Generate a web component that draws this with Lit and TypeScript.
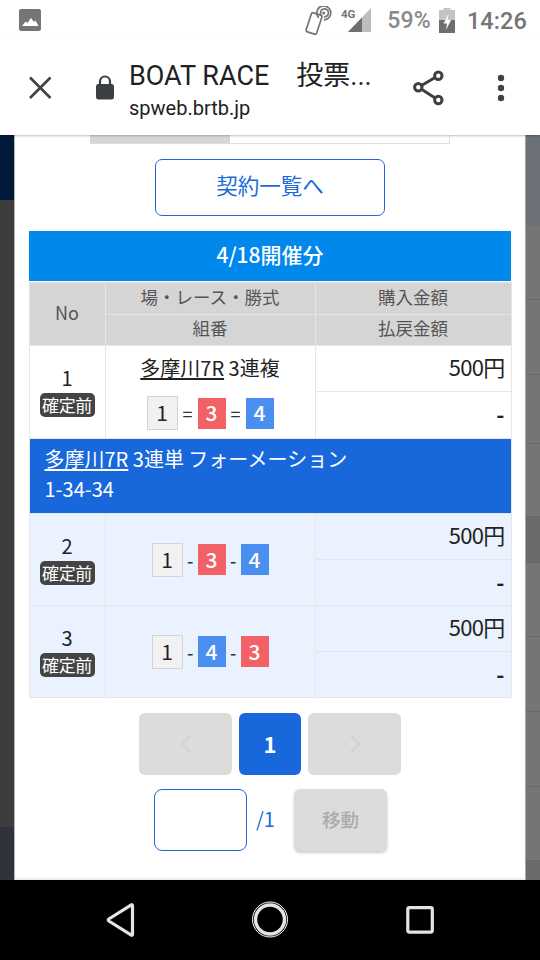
import { LitElement, html, css } from "lit";
import { customElement } from "lit/decorators.js";

const B: Record<number, string> = { 1: "w", 3: "r", 4: "b" };
const RIGHT_SEGS: [number, string][] = [
  [91, "#6c7078"], [74, "#757575"], [75, "#757575"], [69, "#757575"], [73, "#757575"],
  [46, "#6b6b6b"], [74, "#757575"], [75, "#757575"], [75, "#757575"], [74, "#757575"],
];

@customElement("app-root")
export class AppRoot extends LitElement {
  static styles = css`
    :host { display: flex; flex-direction: column; width: 540px; height: 960px; overflow: hidden; font-family: "Noto Sans CJK JP", "Noto Sans", sans-serif; color: #222; background: #fff; }
    .status { height: 40px; flex: none; display: flex; align-items: center; padding: 0 13px 0 19px; position: relative; z-index: 3; background: #fff; }
    .status .sp { flex: 1; }
    .pct { font: 500 23px Roboto, sans-serif; margin-left: 16px; letter-spacing: .2px; color: #8a8a8a; }
    .time { font: 500 23.5px/24px Roboto, sans-serif; margin-left: 12px; letter-spacing: .1px; color: #757575; padding-top: 2px; }
    .toolbar { height: 95px; flex: none; display: flex; align-items: center; background: #fff; position: relative; z-index: 3; box-shadow: 0 1px 2px rgba(0,0,0,.25); }
    .x { margin-left: 27px; width: 26px; height: 26px; flex: none; }
    .lock { margin-left: 42px; width: 20px; height: 25px; flex: none; }
    .titles { margin-left: 14px; width: 275px; flex: none; padding-top: 3px; }
    .t1 { font: 400 27px/34px Roboto, "Noto Sans CJK JP", sans-serif; color: #212121; white-space: pre; margin-bottom: 3px; }
    .t2 { font: 400 20px/24px Roboto, sans-serif; color: #212121; }
    .share { width: 34px; height: 36px; margin-left: 7px; flex: none; }
    .more { width: 12px; height: 28px; margin-left: 50px; flex: none; }
    .main { flex: 1; display: flex; min-height: 0; }
    .strip { display: flex; flex-direction: column; flex: none; }
    .strip.l { width: 14px; }
    .strip.r { width: 15px; }
    .seg { flex: none; box-sizing: border-box; }
    .seg.line { border-bottom: 1px solid #666; }
    .fill { flex: 1; }
    .edge { width: 1px; flex: none; background: #b5b5b5; }
    .edge.rr { background: #a8a8a8; }
    .modal { width: 510px; flex: none; background: #fff; display: flex; flex-direction: column; align-items: center; box-shadow: inset 0 -3px 3px -2px rgba(0,0,0,.12); }
    .remnant { width: 360px; height: 9px; flex: none; display: flex; border: solid #dcdcdc; border-width: 0 1px 1px 0; margin-left: -1px; box-sizing: border-box; }
    .remnant i { width: 140px; background: #d6d6d6; }
    .listbtn { margin-top: 15px; width: 230px; height: 57px; box-sizing: border-box; border: 1.8px solid #1a6adb; border-radius: 7px; color: #1a6adb; font-size: 21.5px; display: flex; align-items: center; justify-content: center; padding-bottom: 6px; }
    .day { margin-top: 15px; width: 482px; height: 50px; background: #0088ec; color: #fff; font-size: 21px; font-weight: 500; display: flex; align-items: center; justify-content: center; padding-bottom: 4px; box-sizing: border-box; }
    table { width: 482px; border-collapse: collapse; table-layout: fixed; margin-top: 1px; box-sizing: border-box; }
    td, th { border: 1.5px solid #e6e6e6; padding: 0; text-align: center; font-weight: 400; }
    th { background: #d5d5d5; color: #555; font-size: 17.5px; height: 26.5px; padding-bottom: 4px; }
    th.no { font-size: 18px; color: #555; }
    .c1 { width: 76px; }
    .c2 { width: 210px; }
    .c3 { width: 196px; }
    .amt { text-align: right; padding-right: 6px; font-size: 22px; color: #222; letter-spacing: -.7px; }
    .amt.a { height: 45px; vertical-align: top; line-height: 40px; }
    .amt.d { height: 42px; padding-bottom: 4px; vertical-align: middle; font-weight: 700; letter-spacing: 0; }
    tr.alt .amt.d { height: 41px; }
    .num { font-size: 20px; line-height: 24px; color: #222; margin: -1px 0 3px; }
    .pill { display: block; margin: 0 auto; background: #444; color: #fff; font-size: 17px; line-height: 24px; width: 55px; border-radius: 5px; letter-spacing: -.3px; }
    .race { font-size: 20px; line-height: 26px; margin-top: 9px; white-space: nowrap; }
    .u { text-decoration: underline; text-underline-offset: 2px; }
    .boats { display: flex; justify-content: center; align-items: center; gap: 4.5px; font-size: 18px; color: #333; }
    .boats.top { margin-top: 15px; margin-bottom: 8px; gap: 5px; }
    .dash { width: 6px; text-align: center; font-weight: 500; }
    .bt { width: 28px; height: 31px; box-sizing: border-box; display: flex; align-items: center; justify-content: center; font-size: 21px; font-weight: 400; padding-bottom: 2px; }
    .bt.w { width: 31px; height: 34px; background: #f1f1f1; border: 1.5px solid #d3d3d3; color: #222; }
    .bt.r { background: #f16165; color: #fff; font-weight: 500; }
    .bt.b { background: #4a8ff0; color: #fff; font-weight: 500; }
    tr.head td { background: #1868dc; color: #fff; text-align: left; padding: 4px 0 8px 15px; font-size: 20px; line-height: 30px; height: 62px; border-color: #e0e6ee; }
    tr.alt td { background: #e9f2fe; }
    .pager { display: flex; gap: 7px; margin-top: 15px; }
    .pg { height: 62px; border-radius: 6px; display: flex; align-items: center; justify-content: center; }
    .pg.arrow { width: 93px; background: #dcdcdc; }
    .pg.on { width: 62px; background: #1868dc; color: #fff; font-size: 22px; font-weight: 700; padding-bottom: 3px; box-sizing: border-box; }
    .pg svg { width: 14px; height: 22px; }
    .jump { display: flex; align-items: center; margin-top: 14px; padding-left: 1px; }
    .box { width: 93px; height: 62px; box-sizing: border-box; border: 1.8px solid #1a6adb; border-radius: 8px; }
    .of { color: #1a6adb; font-size: 20px; margin-left: 9px; width: 38px; padding-bottom: 3px; }
    .go { width: 93px; height: 62px; border-radius: 6px; background: #dcdcdc; color: #aaa; font-size: 18.5px; font-weight: 500; display: flex; align-items: center; justify-content: center; box-shadow: 0 2px 3px rgba(0,0,0,.2); padding-bottom: 3px; box-sizing: border-box; }
    .nav { height: 80px; flex: none; background: #000; position: relative; z-index: 3; }
    .nav svg { display: block; width: 540px; height: 80px; }
  `;

  private boat(n: number) {
    return html`<span class="bt ${B[n]}">${n}</span>`;
  }

  private row(n: number, a: number, b: number, c: number) {
    return html`
      <tr class="alt">
        <td rowspan="2"><div class="num">${n}</div><span class="pill">確定前</span></td>
        <td rowspan="2"><div class="boats">${this.boat(a)}<span class="dash">-</span>${this.boat(b)}<span class="dash">-</span>${this.boat(c)}</div></td>
        <td class="amt a">500円</td>
      </tr>
      <tr class="alt"><td class="amt d">-</td></tr>
    `;
  }

  render() {
    return html`
      <div class="status">
        <svg width="22" height="22" viewBox="0 0 22 22"><rect width="22" height="22" rx="2" fill="#757575"/><path fill="#fff" d="M3 17l3.500-4.500 2 1.500L12 9l3 4 1.500-1.500L19.500 17z"/></svg>
        <span class="sp"></span>
        <svg width="30" height="30" viewBox="0 0 30 30" fill="none" stroke="#757575" stroke-width="1.700" style="margin-top:1px">
          <rect x="6.500" y="7.500" width="11" height="20" rx="1.800" transform="rotate(18 12 17.500)"/>
          <path d="M16.800 11.800A7 7 0 1 1 22 13.900" />
          <path d="M19 8.800A4 4 0 1 1 22 10.800" />
          <circle cx="21.700" cy="6.900" r="1.500" fill="#757575" stroke="none"/>
        </svg>
        <span style="width:9px"></span>
        <svg width="30" height="26" viewBox="0 0 30 26"><path fill="#bdbdbd" d="M30 1v24H7z"/><path fill="#6e6e6e" d="M7 25L21 10.400V25z"/><text x="0" y="10.500" font-family="Roboto, sans-serif" font-weight="700" font-size="11.500" fill="#757575">4G</text></svg>
        <span class="pct">59%</span>
        <svg width="16" height="25" viewBox="0 0 16 25" style="margin-left:8px"><path fill="#c4c4c4" d="M4.500 0h7v2H16v23H0V2h4.500z"/><path fill="#6e6e6e" d="M0 12h16v13H0z"/><path fill="#fff" d="M9.500 6l-5 9.500h3.500l-1 6.500 5-10H8.500z"/></svg>
        <span class="time">14:26</span>
      </div>

      <div class="toolbar">
        <svg class="x" viewBox="0 0 26 26"><path d="M3 2.500l20.500 20.500M23.500 2.500L3 23" stroke="#424242" stroke-width="2.600" fill="none"/></svg>
        <svg class="lock" viewBox="0 0 20 25"><path fill="#3c4043" d="M3 9h14a2.500 2.500 0 0 1 2 2.500V22a2.500 2.500 0 0 1-2 2.500H3A2.500 2.500 0 0 1 1 22V11.500A2.500 2.500 0 0 1 3 9z"/><path fill="none" stroke="#3c4043" stroke-width="2.200" d="M5 10V6.500a5 5 0 0 1 10 0V10"/></svg>
        <div class="titles">
          <div class="t1">BOAT RACE　投票...</div>
          <div class="t2">spweb.brtb.jp</div>
        </div>
        <svg class="share" viewBox="0 0 34 36" fill="none" stroke="#3c4043" stroke-width="3">
          <circle cx="27.300" cy="5.700" r="3.700"/><circle cx="7.300" cy="17.300" r="3.700"/><circle cx="27.300" cy="30" r="3.700"/>
          <path d="M10.500 15.500l13.600-8M10.500 19.300l13.600 8.700"/>
        </svg>
        <svg class="more" viewBox="0 0 12 28" fill="#424242"><circle cx="6" cy="4" r="3.200"/><circle cx="6" cy="14" r="3.200"/><circle cx="6" cy="24" r="3.200"/></svg>
      </div>

      <div class="main">
        <div class="strip l">
          <div class="seg" style="height:65px;background:#021a3a"></div>
          <div class="fill" style="background:#3d3d3d"></div>
          <div class="seg" style="height:53px;background:#2f343b"></div>
        </div>
        <div class="edge"></div>
        <div class="modal">
          <div class="remnant"><i></i></div>
          <div class="listbtn">契約一覧へ</div>
          <div class="day">4/18開催分</div>
          <table>
            <colgroup><col class="c1" /><col class="c2" /><col class="c3" /></colgroup>
            <tr><th class="no" rowspan="2">No</th><th>場・レース・勝式</th><th>購入金額</th></tr>
            <tr><th>組番</th><th>払戻金額</th></tr>
            <tr>
              <td rowspan="2"><div class="num">1</div><span class="pill">確定前</span></td>
              <td rowspan="2">
                <div class="race"><span class="u">多摩川7R</span> 3連複</div>
                <div class="boats top">${this.boat(1)}<span>=</span>${this.boat(3)}<span>=</span>${this.boat(4)}</div>
              </td>
              <td class="amt a">500円</td>
            </tr>
            <tr><td class="amt d">-</td></tr>
            <tr class="head"><td colspan="3"><span class="u">多摩川7R</span> 3連単 フォーメーション<br />1-34-34</td></tr>
            ${this.row(2, 1, 3, 4)}
            ${this.row(3, 1, 4, 3)}
          </table>
          <div class="pager">
            <div class="pg arrow"><svg viewBox="0 0 14 22"><path d="M12 2L3 11l9 9" fill="none" stroke="#d2d2d2" stroke-width="2"/></svg></div>
            <div class="pg on">1</div>
            <div class="pg arrow"><svg viewBox="0 0 14 22"><path d="M2 2l9 9-9 9" fill="none" stroke="#d2d2d2" stroke-width="2"/></svg></div>
          </div>
          <div class="jump">
            <div class="box"></div>
            <span class="of">/1</span>
            <div class="go">移動</div>
          </div>
        </div>
        <div class="edge rr"></div>
        <div class="strip r">
          ${RIGHT_SEGS.map(([h, c], i) => html`<div class="seg ${i ? "line" : ""}" style="height:${h}px;background:${c}"></div>`)}
          <div class="fill" style="background:#6b6b6b"></div>
        </div>
      </div>

      <div class="nav">
        <svg viewBox="0 0 540 80" fill="none">
          <path d="M132.500 25.500v29a.8.8 0 0 1-1.200.7L108.800 41a1.200 1.200 0 0 1 0-2l22.500-14.200a.8.8 0 0 1 1.200.7z" stroke="#e4e4e4" stroke-width="3.200" stroke-linejoin="round"/>
          <circle cx="270" cy="39.500" r="14.500" stroke="#e4e4e4" stroke-width="3.500"/>
          <circle cx="270" cy="39.500" r="17.500" stroke="#fff" stroke-width="1"/>
          <rect x="407.800" y="27.600" width="24.500" height="24.500" rx="1.500" stroke="#e4e4e4" stroke-width="3.200"/>
        </svg>
      </div>
    `;
  }
}
